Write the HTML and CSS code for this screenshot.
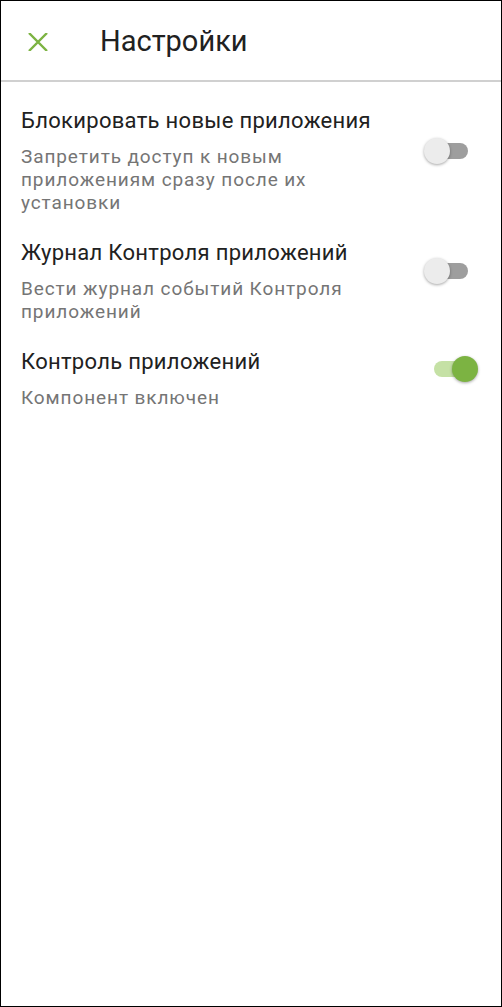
FILE: index.html
```html
<!DOCTYPE html>
<html lang="ru">
<head>
  <meta charset="UTF-8">
  <meta name="viewport" content="width=device-width, initial-scale=1.0">
  <title>Настройки</title>
  <link rel="stylesheet" href="styles.css">
</head>
<body>
  <div class="screen">
    <div class="toolbar">
      <button class="close-btn" aria-label="Закрыть">
        <svg width="20" height="18" viewBox="0 0 20 18">
          <path d="M1 0 L19 18 M19 0 L1 18" stroke="#7cb342" stroke-width="2.4" fill="none"/>
        </svg>
      </button>
      <h1 class="toolbar-title">Настройки</h1>
    </div>

    <ul class="settings">
      <li class="setting">
        <div class="setting-text">
          <div class="setting-title">Блокировать новые приложения</div>
          <div class="setting-desc">Запретить доступ к новым приложениям сразу после их установки</div>
        </div>
        <div class="switch"><span class="track"></span><span class="thumb"></span></div>
      </li>
      <li class="setting">
        <div class="setting-text">
          <div class="setting-title">Журнал Контроля приложений</div>
          <div class="setting-desc">Вести журнал событий Контроля приложений</div>
        </div>
        <div class="switch"><span class="track"></span><span class="thumb"></span></div>
      </li>
      <li class="setting">
        <div class="setting-text">
          <div class="setting-title">Контроль приложений</div>
          <div class="setting-desc">Компонент включен</div>
        </div>
        <div class="switch on"><span class="track"></span><span class="thumb"></span></div>
      </li>
    </ul>
  </div>
</body>
</html>
```

FILE: styles.css
```css
html, body {
  margin: 0;
  padding: 0;
  height: 100%;
}

body {
  font-family: Roboto, "Noto Sans", Arial, sans-serif;
  background-color: #fff;
  color: #212121;
}

.screen {
  box-sizing: border-box;
  height: 100vh;
  border: 1px solid #000;
  background: #fff;
}

.toolbar {
  display: flex;
  align-items: center;
  height: 79px;
  border-bottom: 2px solid #d0d0d0;
}

.close-btn {
  border: none;
  background: none;
  padding: 0;
  margin-left: 27px;
  margin-top: 2px;
  width: 20px;
  height: 18px;
  display: flex;
  cursor: pointer;
}

.toolbar-title {
  margin: 0 0 0 52px;
  font-size: 29px;
  font-weight: 400;
  color: #212121;
}

.settings {
  list-style: none;
  margin: 0;
  padding: 12px 0 0;
}

.setting {
  display: flex;
  align-items: center;
  padding: 13px 23px 12px 20px;
}

.setting-text {
  flex: 1;
  padding-right: 30px;
}

.setting-title {
  font-size: 22px;
  line-height: 28px;
  letter-spacing: 0.3px;
}

.setting-desc {
  margin-top: 10px;
  font-size: 19px;
  line-height: 23px;
  letter-spacing: 0.9px;
  color: #757575;
}

.switch {
  position: relative;
  flex: none;
  width: 54px;
  height: 26px;
  margin-bottom: 20px;
}

.switch .track {
  position: absolute;
  left: 10px;
  top: 5px;
  width: 34px;
  height: 16px;
  border-radius: 8px;
  background: #9e9e9e;
}

.switch .thumb {
  position: absolute;
  left: 0;
  top: 0;
  width: 26px;
  height: 26px;
  border-radius: 50%;
  background: #ececec;
  box-shadow: 0 1px 3px rgba(0, 0, 0, 0.35);
}

.switch.on .track {
  background: #c5e1a5;
}

.switch.on .thumb {
  left: 28px;
  background: #7cb342;
}
```
